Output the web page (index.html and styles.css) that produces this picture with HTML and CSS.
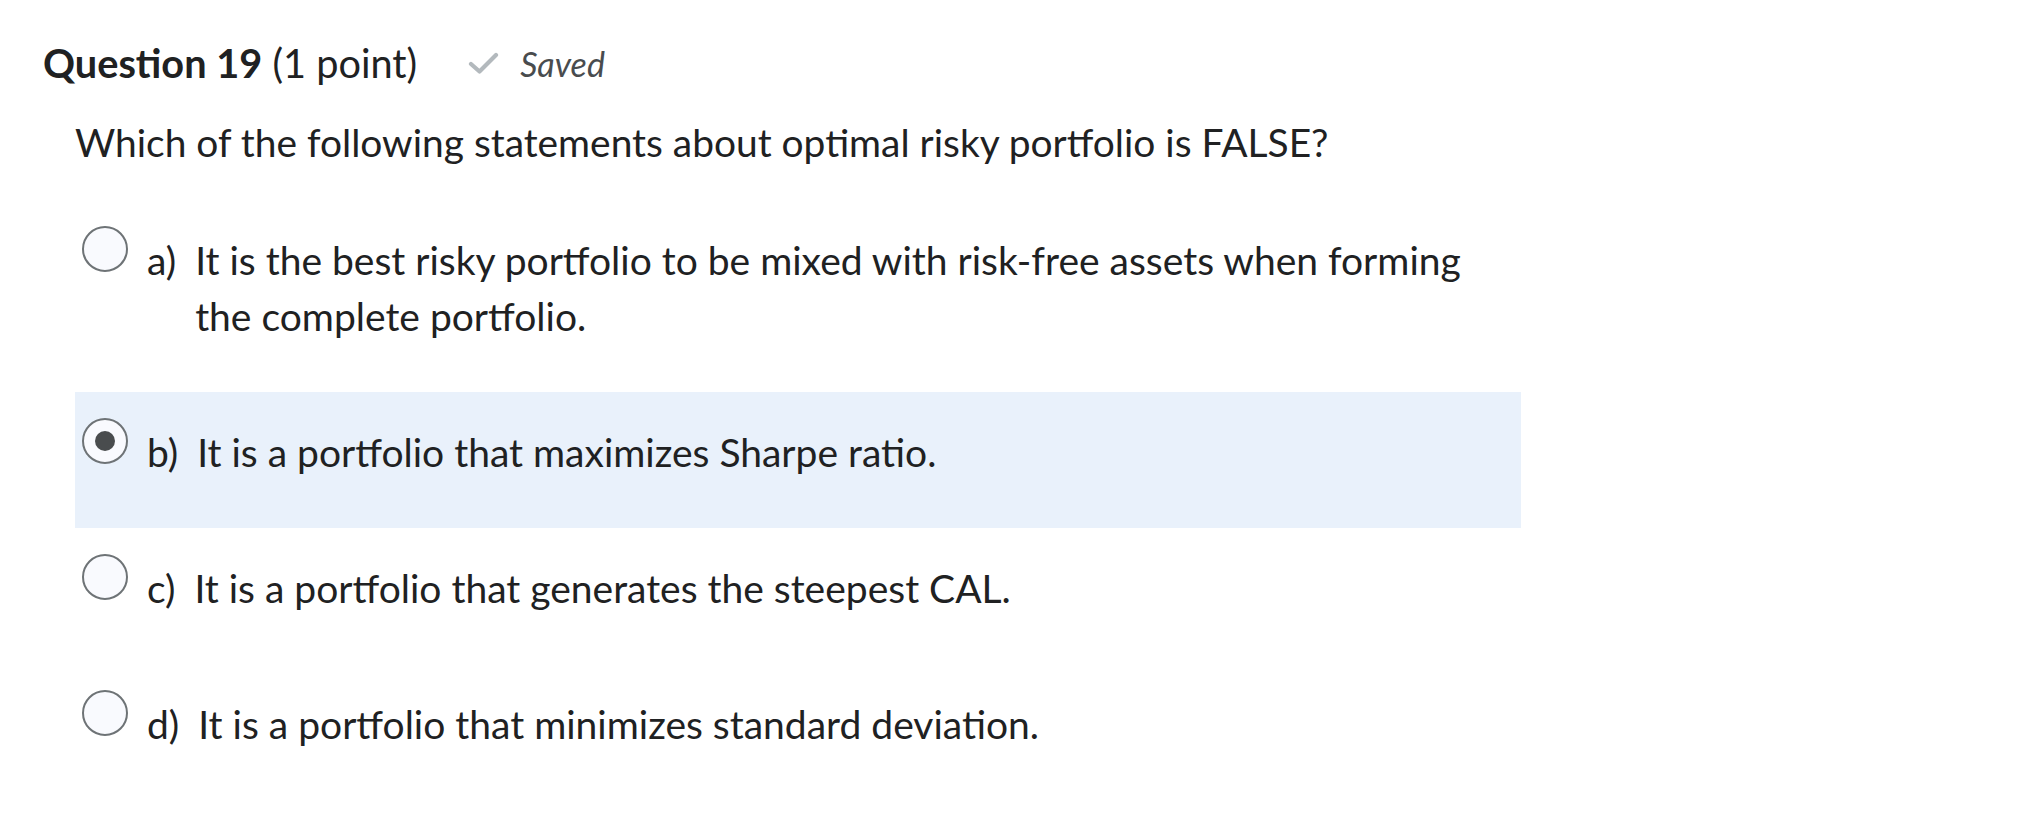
FILE: index.html
```html
<!DOCTYPE html>
<html lang="en">
<head>
<meta charset="utf-8">
<title>Question 19</title>
<link rel="stylesheet" href="styles.css">
</head>
<body>
<div class="question">
  <div class="q-header">
    <h2 class="q-title"><strong>Question 19</strong> (1 point)</h2>
    <span class="q-saved">
      <svg class="check" viewBox="0 0 31 22" width="31" height="22" aria-hidden="true">
        <path d="M3 12 L11.5 19.5 L28 3" fill="none" stroke="#b3b9bd" stroke-width="4.2" stroke-linecap="round" stroke-linejoin="round"/>
      </svg>
      <em>Saved</em>
    </span>
  </div>
  <p class="q-text">Which of the following statements about optimal risky portfolio is FALSE?</p>
  <div class="options">
    <label class="option">
      <span class="radio"></span>
      <span class="opt-label"><span class="letter">a)</span><span class="opt-text">It is the best risky portfolio to be mixed with risk-free assets when forming the complete portfolio.</span></span>
    </label>
    <label class="option selected">
      <span class="radio checked"></span>
      <span class="opt-label"><span class="letter">b)</span><span class="opt-text">It is a portfolio that maximizes Sharpe ratio.</span></span>
    </label>
    <label class="option">
      <span class="radio"></span>
      <span class="opt-label"><span class="letter">c)</span><span class="opt-text">It is a portfolio that generates the steepest CAL.</span></span>
    </label>
    <label class="option">
      <span class="radio"></span>
      <span class="opt-label"><span class="letter">d)</span><span class="opt-text">It is a portfolio that minimizes standard deviation.</span></span>
    </label>
  </div>
</div>
</body>
</html>
```
FILE: styles.css
```css
html, body {
  margin: 0;
  padding: 0;
  background: #ffffff;
}
body {
  font-family: Lato, "Noto Sans", sans-serif;
  color: #202122;
}
.question {
  padding: 35px 0 0 43px;
}
.q-header {
  display: flex;
  align-items: center;
  gap: 51px;
  height: 56px;
}
.q-title {
  margin: 0;
  font-size: 39.7px;
  font-weight: 400;
  line-height: 56px;
}
.q-title strong {
  font-weight: 700;
}
.q-saved {
  display: flex;
  align-items: center;
  gap: 21px;
  font-size: 34px;
  color: #494c4e;
}
.q-saved em {
  font-style: italic;
}
.q-text {
  margin: 23px 0 0 32px;
  font-size: 38.9px;
  line-height: 56px;
}
.options {
  margin: 30px 0 0 32px;
  width: 1446px;
}
.option {
  display: flex;
  align-items: flex-start;
  padding: 32px 20px 48px 7px;
  font-size: 39px;
  line-height: 56px;
}
.option.selected {
  background: #e9f1fb;
}
.radio {
  flex: none;
  box-sizing: border-box;
  width: 46px;
  height: 46px;
  margin-top: -6px;
  border: 2px solid #6e7376;
  border-radius: 50%;
  background: #f9fafe;
  display: flex;
  align-items: center;
  justify-content: center;
}
.radio.checked::after {
  content: "";
  width: 20px;
  height: 20px;
  border-radius: 50%;
  background: #494c4e;
}
.opt-label {
  display: flex;
  margin-left: 19px;
}
.letter {
  flex: none;
  margin-right: 19px;
}
```
